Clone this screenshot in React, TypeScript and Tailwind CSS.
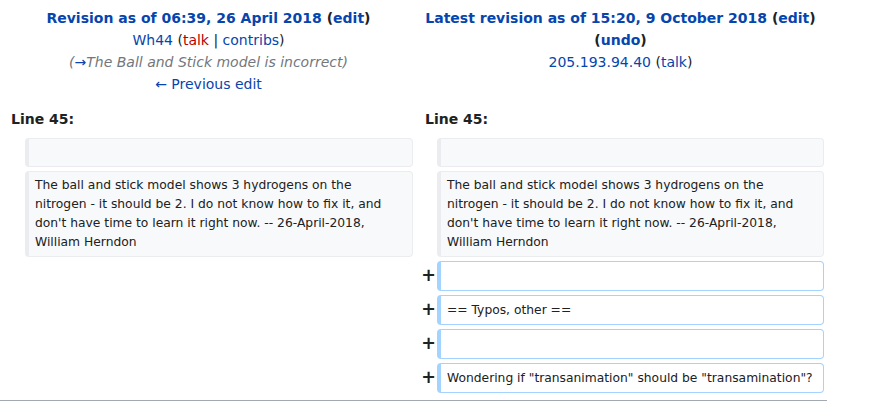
import React from 'react';

const link = 'text-[#0645ad]';

const ContextBox: React.FC<{ children?: React.ReactNode }> = ({ children }) => (
  <div className="border border-l-4 border-[#eaecf0] bg-[#f8f9fa] rounded-[4px] px-[6px] py-[4px] text-[12.3px] leading-[19px] min-h-[29px] whitespace-pre-wrap">
    {children}
  </div>
);

const AddedBox: React.FC<{ children?: React.ReactNode }> = ({ children }) => (
  <div className="border border-l-4 border-[#a3d3ff] bg-white rounded-[4px] px-[6px] py-[4px] text-[12.3px] leading-[20px] h-[30px] whitespace-pre-wrap">
    {children}
  </div>
);

const Plus: React.FC = () => (
  <div className="flex items-center justify-end h-[30px] mr-[-3px] text-[17.5px] font-bold leading-none">+</div>
);

const comment =
  'The ball and stick model shows 3 hydrogens on the nitrogen - it should be 2. I do not know how to fix it, and don\'t have time to learn it right now. -- 26-April-2018, William Herndon';

export default function App() {
  return (
    <div className="w-[874px] h-[415px] bg-white text-[#202122] font-['DejaVu_Sans',sans-serif] text-[14px] overflow-hidden">
      <div className="grid grid-cols-[17px_388px_16px_387px] gap-1 p-1 w-[828px]">
        {/* headers */}
        <div className="col-span-2 text-center leading-[22px] pt-[3px]">
          <div className="font-bold">
            <span className={link}>Revision as of 06:39, 26 April 2018</span> (<span className={link}>edit</span>)
          </div>
          <div>
            <span className={link}>Wh44</span> (<span className="text-[#ba0000]">talk</span> | <span className={link}>contribs</span>)
          </div>
          <div className="italic text-[#72777d]">
            (<span className={link}>→</span>The Ball and Stick model is incorrect)
          </div>
          <div>
            <span className={link}>← Previous edit</span>
          </div>
        </div>
        <div className="col-span-2 text-center leading-[22px] pt-[3px]">
          <div className="font-bold">
            <span className={link}>Latest revision as of 15:20, 9 October 2018</span> (<span className={link}>edit</span>)
          </div>
          <div className="font-bold">
            (<span className={link}>undo</span>)
          </div>
          <div>
            <span className={link}>205.193.94.40</span> (<span className={link}>talk</span>)
          </div>
        </div>

        {/* line numbers */}
        <div className="col-span-2 font-bold leading-[22px] pt-[9px] pb-[4px] pl-[7px]">Line 45:</div>
        <div className="col-span-2 font-bold leading-[22px] pt-[9px] pb-[4px] pl-[8px]">Line 45:</div>

        {/* context rows */}
        <div />
        <ContextBox />
        <div />
        <ContextBox />

        <div />
        <ContextBox>{comment}</ContextBox>
        <div />
        <ContextBox>{comment}</ContextBox>

        {/* added rows */}
        <div className="col-span-2" />
        <Plus />
        <AddedBox />

        <div className="col-span-2" />
        <Plus />
        <AddedBox>== Typos, other ==</AddedBox>

        <div className="col-span-2" />
        <Plus />
        <AddedBox />

        <div className="col-span-2" />
        <Plus />
        <AddedBox>Wondering if "transanimation" should be "transamination"?</AddedBox>
      </div>
      <div className="w-[827px] h-px bg-[#a2a9b1] mt-[3px]" />
    </div>
  );
}
